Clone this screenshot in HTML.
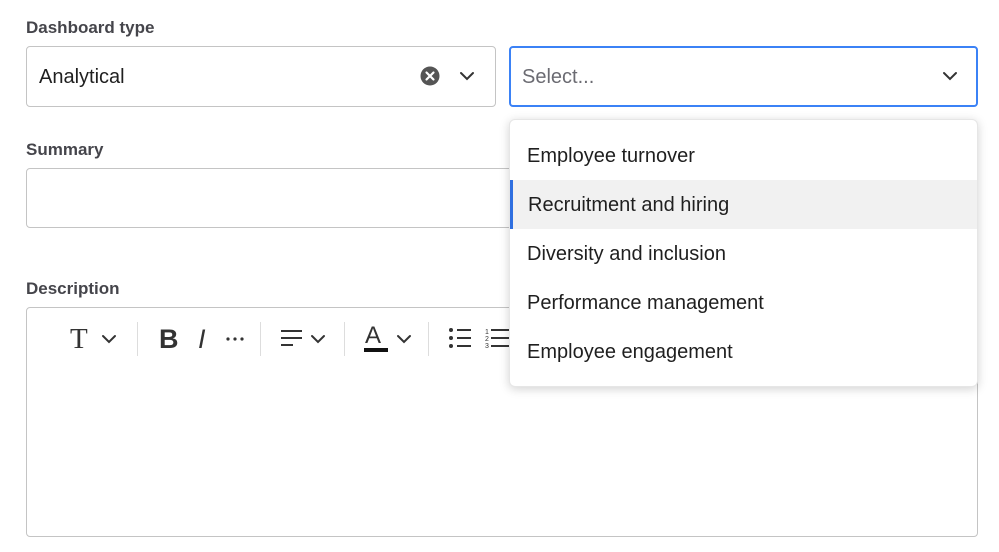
<!DOCTYPE html>
<html><head><style>
body{margin:0;width:999px;height:552px;background:#fff;font-family:"Liberation Sans",sans-serif;position:relative;overflow:hidden}
.lbl{position:absolute;left:26px;font-size:17px;font-weight:bold;color:#45454b}
.box{position:absolute;border:1px solid #c4c4c4;border-radius:4px;box-sizing:border-box;background:#fff}
.t{position:absolute;font-size:20px;color:#1f1f1f}
.sep{position:absolute;top:322px;width:1px;height:34px;background:#ddd}
.dd{position:absolute;left:509px;top:119px;width:469px;height:268px;background:#fff;border-radius:6px;box-shadow:0 2px 10px rgba(0,0,0,.18);border:1px solid #e6e6e6;box-sizing:border-box}
.it{position:absolute;left:0;width:100%;height:49px;line-height:51px;padding-left:17px;box-sizing:border-box;font-size:20px;color:#1f1f1f}
</style></head><body>
<div class="lbl" style="top:18px">Dashboard type</div>
<div class="box" style="left:26px;top:46px;width:470px;height:61px"></div>
<div class="t" style="left:39px;top:66px">Analytical</div>
<svg style="position:absolute;left:420px;top:66px" width="20" height="20" viewBox="0 0 20 20"><circle cx="10" cy="10" r="9.5" fill="#555"/><path d="M6.5 6.5l7 7M13.5 6.5l-7 7" stroke="#fff" stroke-width="2.2" stroke-linecap="round"/></svg>
<svg style="position:absolute;left:458px;top:70px" width="18" height="12" viewBox="0 0 18 12"><path d="M3 3l6 6 6-6" stroke="#333" stroke-width="2" fill="none" stroke-linecap="round"/></svg>
<div class="box" style="left:509px;top:46px;width:469px;height:61px;border:2px solid #3b82f6"></div>
<div class="t" style="left:522px;top:66px;color:#6b6b72">Select...</div>
<svg style="position:absolute;left:941px;top:70px" width="18" height="12" viewBox="0 0 18 12"><path d="M3 3l6 6 6-6" stroke="#333" stroke-width="2" fill="none" stroke-linecap="round"/></svg>
<div class="lbl" style="top:140px">Summary</div>
<div class="box" style="left:26px;top:168px;width:952px;height:60px"></div>
<div class="lbl" style="top:279px">Description</div>
<div class="box" style="left:26px;top:307px;width:952px;height:230px"></div>
<div style="position:absolute;left:70px;top:323px;font-family:'Liberation Serif',serif;font-size:29px;color:#333">T</div>
<svg style="position:absolute;left:100px;top:333px" width="18" height="12" viewBox="0 0 18 12"><path d="M3 3l6 6 6-6" stroke="#333" stroke-width="2" fill="none" stroke-linecap="round"/></svg>
<div class="sep" style="left:137px"></div>
<div style="position:absolute;left:159px;top:324px;font-size:27px;font-weight:bold;color:#333">B</div>
<div style="position:absolute;left:198px;top:324px;font-style:italic;font-size:27px;color:#333">I</div>
<svg style="position:absolute;left:225px;top:336px" width="22" height="6" viewBox="0 0 22 6"><circle cx="3" cy="3" r="1.6" fill="#333"/><circle cx="10" cy="3" r="1.6" fill="#333"/><circle cx="17" cy="3" r="1.6" fill="#333"/></svg>
<div class="sep" style="left:260px"></div>
<svg style="position:absolute;left:280px;top:328px" width="50" height="22" viewBox="0 0 50 22"><path d="M1 3h21M1 10h21M1 17h12" stroke="#333" stroke-width="2"/><path d="M32 8l6 6 6-6" stroke="#333" stroke-width="2" fill="none" stroke-linecap="round"/></svg>
<div class="sep" style="left:344px"></div>
<div style="position:absolute;left:365px;top:322px;font-size:24px;color:#333">A</div>
<div style="position:absolute;left:364px;top:348px;width:24px;height:4px;background:#111"></div>
<svg style="position:absolute;left:395px;top:333px" width="18" height="12" viewBox="0 0 18 12"><path d="M3 3l6 6 6-6" stroke="#333" stroke-width="2" fill="none" stroke-linecap="round"/></svg>
<div class="sep" style="left:428px"></div>
<svg style="position:absolute;left:448px;top:327px" width="62" height="26" viewBox="0 0 62 26"><circle cx="3" cy="3" r="2" fill="#333"/><circle cx="3" cy="11" r="2" fill="#333"/><circle cx="3" cy="19" r="2" fill="#333"/><path d="M9 3h14M9 11h14M9 19h14" stroke="#333" stroke-width="2"/><text x="37" y="7" font-size="7" font-family="Liberation Sans" fill="#333">1</text><text x="37" y="14" font-size="7" font-family="Liberation Sans" fill="#333">2</text><text x="37" y="21" font-size="7" font-family="Liberation Sans" fill="#333">3</text><path d="M43 3h19M43 11h19M43 19h19" stroke="#333" stroke-width="2"/></svg>
<div class="dd">
<div class="it" style="top:11px">Employee turnover</div>
<div class="it" style="top:60px;background:#f1f1f1;border-left:3px solid #2f6fe0;padding-left:15px">Recruitment and hiring</div>
<div class="it" style="top:109px">Diversity and inclusion</div>
<div class="it" style="top:158px">Performance management</div>
<div class="it" style="top:207px">Employee engagement</div>
</div>
</body></html>
